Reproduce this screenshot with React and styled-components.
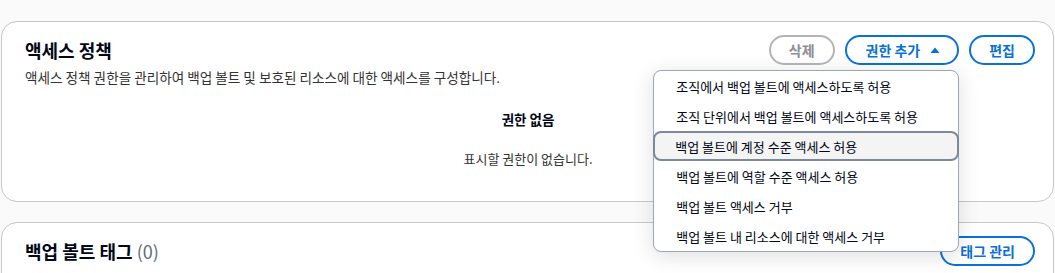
import React from 'react';
import styled, { createGlobalStyle } from 'styled-components';

const GlobalStyle = createGlobalStyle`
  html, body {
    margin: 0;
    padding: 0;
    background: #fafafa;
    font-family: 'Noto Sans CJK KR', 'Noto Sans', sans-serif;
    color: #000716;
  }
`;

const Page = styled.div`
  display: flex;
  flex-direction: column;
  gap: 20px;
  padding: 21px 1px 0 1px;
  overflow: hidden;
  height: 273px;
  box-sizing: border-box;
`;

const Card = styled.section`
  background: #fff;
  border: 1px solid #c6c6cd;
  border-radius: 16px;
  padding: 13px 18px ${({ bottom }) => bottom || 0}px 23px;
  flex-shrink: 0;
`;

const Header = styled.div`
  display: flex;
  align-items: center;
  justify-content: space-between;
  height: 30px;
`;

const Title = styled.h2`
  margin: 0;
  font-size: 18px;
  font-weight: 700;
  line-height: 22px;
  color: #000716;
`;

const Count = styled.span`
  font-weight: 400;
  color: #5f6b7a;
`;

const Actions = styled.div`
  display: flex;
  align-items: center;
  gap: 10px;
`;

const Button = styled.button`
  display: inline-flex;
  align-items: center;
  gap: 10px;
  height: 30px;
  box-sizing: border-box;
  padding: 0 ${({ pr }) => pr || 18}px 0 ${({ pl }) => pl || 18}px;
  border-radius: 20px;
  border: 2px solid ${({ disabled }) => (disabled ? '#b4b4bb' : '#0972d3')};
  background: #fff;
  color: ${({ disabled }) => (disabled ? '#8c8c94' : '#0972d3')};
  font-family: inherit;
  font-size: 14px;
  font-weight: 700;
  line-height: 16px;
`;

const MenuAnchor = styled.div`
  position: relative;
`;

const Menu = styled.ul`
  position: absolute;
  top: 35px;
  right: 0;
  width: 306px;
  box-sizing: border-box;
  margin: 0;
  padding: 0;
  list-style: none;
  background: #fff;
  border: 1px solid #9ba7b6;
  border-radius: 8px;
  box-shadow: 0 4px 20px 1px rgba(0, 7, 22, 0.12);
  z-index: 10;
`;

const MenuItem = styled.li`
  height: 30px;
  display: flex;
  align-items: center;
  box-sizing: border-box;
  padding-left: 20px;
  font-size: 13px;
  color: #000716;
  border: 2px solid ${({ active }) => (active ? '#7d8998' : 'transparent')};
  background: ${({ active }) => (active ? '#f4f4f4' : 'transparent')};
  border-radius: ${({ active }) => (active ? '8px' : '0')};
  margin: ${({ active }) => (active ? '0 -1px' : '0')};
  white-space: nowrap;
`;

const Description = styled.p`
  margin: 4px 0 0;
  font-size: 13.6px;
  line-height: 16px;
  color: #333;
`;

const Empty = styled.div`
  display: flex;
  flex-direction: column;
  align-items: center;
  gap: 24px;
  margin-top: 26px;
  margin-right: 4px;
`;

const EmptyTitle = styled.div`
  font-size: 13.5px;
  font-weight: 700;
  line-height: 16px;
  color: #000716;
`;

const EmptyText = styled.div`
  font-size: 13px;
  line-height: 16px;
  color: #333;
`;

const Caret = () => (
  <svg width="10" height="10" viewBox="0 0 10 10">
    <path d="M0.5 8 L5 2.5 L9.5 8 Z" fill="#0972d3" />
  </svg>
);

const menuItems = [
  '조직에서 백업 볼트에 액세스하도록 허용',
  '조직 단위에서 백업 볼트에 액세스하도록 허용',
  '백업 볼트에 계정 수준 액세스 허용',
  '백업 볼트에 역할 수준 액세스 허용',
  '백업 볼트 액세스 거부',
  '백업 볼트 내 리소스에 대한 액세스 거부',
];

export default function App() {
  return (
    <>
      <GlobalStyle />
      <Page>
        <Card bottom={34}>
          <Header>
            <Title>액세스 정책</Title>
            <Actions>
              <Button disabled pl={18} pr={18}>삭제</Button>
              <MenuAnchor>
                <Button pl={19} pr={17}>
                  권한 추가 <Caret />
                </Button>
                <Menu>
                  {menuItems.map((item, i) => (
                    <MenuItem key={item} active={i === 2}>
                      {item}
                    </MenuItem>
                  ))}
                </Menu>
              </MenuAnchor>
              <Button pl={18} pr={18}>편집</Button>
            </Actions>
          </Header>
          <Description>
            액세스 정책 권한을 관리하여 백업 볼트 및 보호된 리소스에 대한 액세스를 구성합니다.
          </Description>
          <Empty>
            <EmptyTitle>권한 없음</EmptyTitle>
            <EmptyText>표시할 권한이 없습니다.</EmptyText>
          </Empty>
        </Card>
        <Card bottom={40}>
          <Header>
            <Title>
              백업 볼트 태그 <Count>(0)</Count>
            </Title>
            <Actions>
              <Button pl={18} pr={18}>태그 관리</Button>
            </Actions>
          </Header>
        </Card>
      </Page>
    </>
  );
}
